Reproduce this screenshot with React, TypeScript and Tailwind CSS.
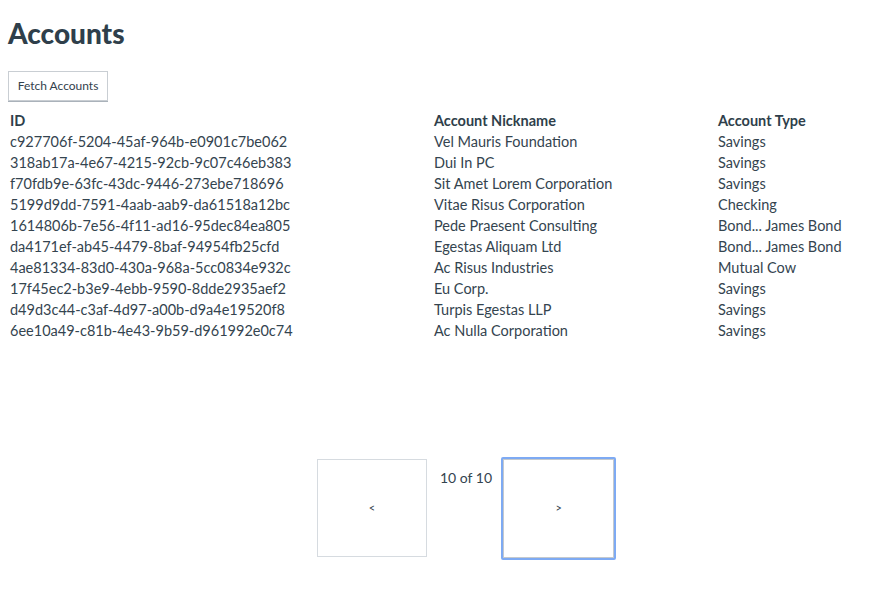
import React from 'react';

const accounts = [
  { id: 'c927706f-5204-45af-964b-e0901c7be062', nickname: 'Vel Mauris Foundation', type: 'Savings' },
  { id: '318ab17a-4e67-4215-92cb-9c07c46eb383', nickname: 'Dui In PC', type: 'Savings' },
  { id: 'f70fdb9e-63fc-43dc-9446-273ebe718696', nickname: 'Sit Amet Lorem Corporation', type: 'Savings' },
  { id: '5199d9dd-7591-4aab-aab9-da61518a12bc', nickname: 'Vitae Risus Corporation', type: 'Checking' },
  { id: '1614806b-7e56-4f11-ad16-95dec84ea805', nickname: 'Pede Praesent Consulting', type: 'Bond... James Bond' },
  { id: 'da4171ef-ab45-4479-8baf-94954fb25cfd', nickname: 'Egestas Aliquam Ltd', type: 'Bond... James Bond' },
  { id: '4ae81334-83d0-430a-968a-5cc0834e932c', nickname: 'Ac Risus Industries', type: 'Mutual Cow' },
  { id: '17f45ec2-b3e9-4ebb-9590-8dde2935aef2', nickname: 'Eu Corp.', type: 'Savings' },
  { id: 'd49d3c44-c3af-4d97-a00b-d9a4e19520f8', nickname: 'Turpis Egestas LLP', type: 'Savings' },
  { id: '6ee10a49-c81b-4e43-9b59-d961992e0c74', nickname: 'Ac Nulla Corporation', type: 'Savings' },
];

export default function App() {
  return (
    <div
      className="min-h-[612px] bg-white px-2 text-[#34444f]"
      style={{ fontFamily: 'Lato, "Open Sans", sans-serif' }}
    >
      <h1 className="pt-[14px] text-[28px] font-black leading-[38px] text-[#2f3f4b]">Accounts</h1>
      <button className="mt-[19px] h-[30px] w-[100px] border border-[#c9ced3] bg-white text-[12px] text-[#33414c] shadow-[0_1px_0_#aab2ba]">
        Fetch Accounts
      </button>
      <div className="mt-[9px] grid grid-cols-[424px_284px_1fr] pl-[2px] text-[14.5px] leading-[21px]">
        <div className="font-bold text-[#2f3f4b]">ID</div>
        <div className="font-bold text-[#2f3f4b]">Account Nickname</div>
        <div className="font-bold text-[#2f3f4b]">Account Type</div>
        {accounts.map((a) => (
          <React.Fragment key={a.id}>
            <div>{a.id}</div>
            <div>{a.nickname}</div>
            <div>{a.type}</div>
          </React.Fragment>
        ))}
      </div>
      <div className="mt-[118px] ml-[309px] flex items-start">
        <button className="h-[98px] w-[110px] border border-[#d6dbe0] bg-white text-[11px] text-[#33414c]">
          &lt;
        </button>
        <span className="ml-[13px] mt-[8px] text-[14px]">10 of 10</span>
        <button className="ml-[9px] -mt-[2px] h-[103px] w-[115px] rounded-[2px] border-2 border-[#7eaaf3] bg-white text-[11px] text-[#33414c] shadow-[inset_0_0_0_1px_#c4c9ce]">
          &gt;
        </button>
      </div>
    </div>
  );
}
